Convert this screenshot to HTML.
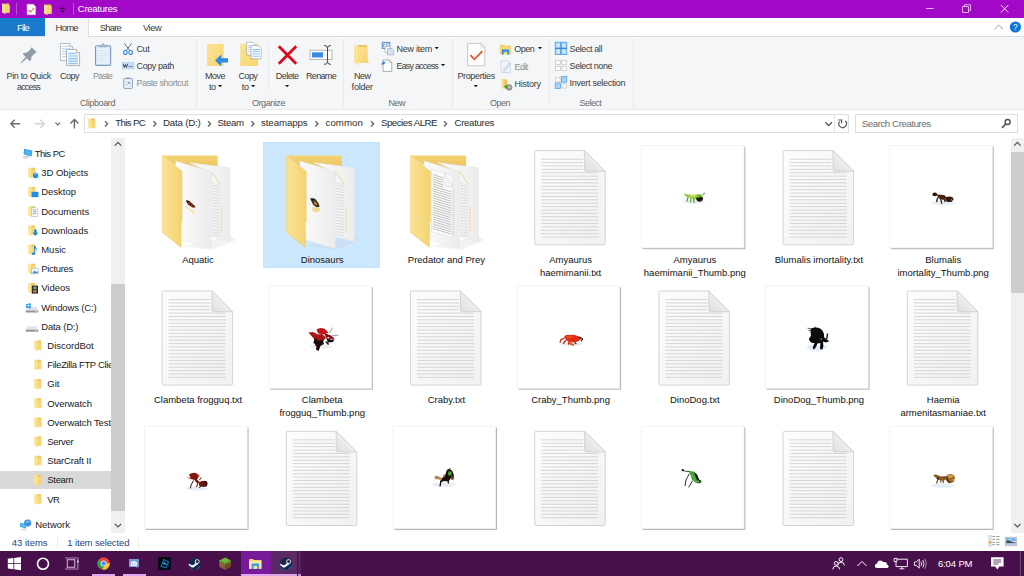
<!DOCTYPE html>
<html>
<head>
<meta charset="utf-8">
<title>Creatures</title>
<style>
html,body{margin:0;padding:0;background:#fff;}
body{width:1024px;height:576px;overflow:hidden;font-family:"Liberation Sans",sans-serif;}
#root{position:relative;width:1024px;height:576px;overflow:hidden;background:#fff;}
.a{position:absolute;}
.t{position:absolute;white-space:pre;}
svg{position:absolute;overflow:visible;}
</style>
</head>
<body>
<div id="root">
<!-- title bar -->
<div class="a" style="left:0;top:0;width:1024px;height:18px;background:#a209c7;"></div>
<div class="a" style="left:16px;top:3px;width:1px;height:12px;background:#b84fd2;"></div>
<div class="a" style="left:73px;top:3px;width:1px;height:12px;background:#b84fd2;"></div>
<!-- tab strip -->
<div class="a" style="left:0;top:18px;width:1024px;height:18px;background:#fff;"></div>
<div class="a" style="left:0;top:18px;width:45px;height:18px;background:#1979ca;"></div>
<!-- ribbon -->
<div class="a" style="left:0;top:36px;width:1024px;height:74px;background:#f5f6f7;border-top:1px solid #dadbdc;border-bottom:1px solid #e9eaeb;box-sizing:border-box;"></div>
<div class="a" style="left:45px;top:18px;width:44px;height:19px;background:#f5f6f7;border-right:1px solid #e0e1e2;box-sizing:border-box;"></div>
<!-- ribbon separators -->
<div class="a" style="left:196px;top:39px;width:1px;height:69px;background:#e9eaec;"></div>
<div class="a" style="left:268px;top:42px;width:1px;height:48px;background:#e9eaec;"></div>
<div class="a" style="left:343px;top:39px;width:1px;height:69px;background:#e9eaec;"></div>
<div class="a" style="left:452px;top:39px;width:1px;height:69px;background:#e9eaec;"></div>
<div class="a" style="left:549px;top:39px;width:1px;height:69px;background:#e9eaec;"></div>
<div class="a" style="left:633px;top:39px;width:1px;height:69px;background:#e9eaec;"></div>
<!-- address bar -->
<div class="a" style="left:84px;top:114px;width:765px;height:19px;border:1px solid #dfdfdf;box-sizing:border-box;background:#fff;"></div>
<div class="a" style="left:834px;top:115px;width:1px;height:17px;background:#e5e5e5;"></div>
<div class="a" style="left:855px;top:114px;width:163px;height:19px;border:1px solid #dfdfdf;box-sizing:border-box;background:#fff;"></div>
<!-- main scrollbar -->
<div class="a" style="left:1011px;top:138px;width:13px;height:395px;background:#f0f0f0;"></div>
<div class="a" style="left:1011px;top:152px;width:13px;height:141px;background:#cdcdcd;"></div>
<!-- sidebar selection -->
<div class="a" style="left:0;top:470.6px;width:111.3px;height:18.8px;background:#d9d9d9;"></div>
<!-- ribbon + titlebar + nav icons (absolute page coords) -->
<svg width="1024" height="140" viewBox="0 0 1024 140" style="left:0;top:0;">
<defs>
<linearGradient id="fy" x1="0" y1="0" x2="1" y2="1"><stop offset="0" stop-color="#fde495"/><stop offset="1" stop-color="#f6d36f"/></linearGradient>
</defs>
<!-- title bar: folder -->
<g id="tfold">
<path d="M4.6,3.4 H9 V12.6 H5.2 Z" fill="#eec55a"/>
<path d="M2,3.2 L5.6,4.4 V14 L2,12.4 Z" fill="#fbe28d"/>
<path d="M5.6,5 H9.8 V12.8 H5.6 Z" fill="#f6d574"/>
</g>
<!-- title bar: properties doc -->
<path d="M27,4.3 H33.4 L35.6,6.5 V14.8 H27 Z" fill="#fbfbfb" stroke="#d8d8d8" stroke-width=".4"/>
<path d="M28.6,10.2 L30.4,12 L34,8" fill="none" stroke="#e36a35" stroke-width="1.1"/>
<!-- title bar: folder 2 -->
<g transform="translate(42,1)">
<path d="M4.6,3.4 H9 V12.6 H5.2 Z" fill="#eec55a"/>
<path d="M2,3.2 L5.6,4.4 V14 L2,12.4 Z" fill="#fbe28d"/>
<path d="M5.6,5 H9.8 V12.8 H5.6 Z" fill="#f6d574"/>
</g>
<!-- title bar dropdown -->
<path d="M60,8.3 H64.8" stroke="#1a0520" stroke-width="1"/>
<path d="M60.2,10.6 H64.6 L62.4,12.8 Z" fill="#1a0520"/>
<!-- window controls -->
<path d="M926,8.5 H933.5" stroke="#f6e2fa" stroke-width=".8"/>
<path d="M962.5,6.5 H968.5 V12.5 H962.5 Z" fill="none" stroke="#f3d4f8" stroke-width=".8"/>
<path d="M964.5,6.5 V4.7 H970.5 V10.7 H968.5" fill="none" stroke="#f3d4f8" stroke-width=".8"/>
<path d="M1000.8,5 L1008.4,12.6 M1008.4,5 L1000.8,12.6" stroke="#fbf0fd" stroke-width=".9"/>
<!-- ribbon collapse chevron + help -->
<path d="M994.4,29.2 L998.7,25 L1003,29.2" fill="none" stroke="#9a9a9a" stroke-width="1"/>
<circle cx="1015.4" cy="27" r="5.6" fill="#0f76d2"/>
<text x="1015.4" y="30.2" font-family="Liberation Sans, sans-serif" font-size="8.4" fill="#fff" text-anchor="middle">?</text>

<!-- pin -->
<g transform="translate(26.3,57.6) rotate(45)" fill="#8e9aa6">
<path d="M-3.6,-11.1 H3.6 L2.9,-8.6 V-4.6 L5,-1.4 V0 H-5 V-1.4 L-2.9,-4.6 V-8.6 Z"/>
<path d="M-0.9,0 H0.9 L0.4,7.5 H-0.4 Z"/>
</g>
<!-- copy -->
<g>
<path d="M60.4,43.5 H69.4 L72.7,46.8 V60.6 H60.4 Z" fill="#fff" stroke="#a6a6a6" stroke-width=".8"/>
<path d="M62,46.3 H68.4 M62,48.9 H71 M62,51.5 H71 M62,54.1 H71 M62,56.7 H71" stroke="#b9d9f7" stroke-width="1.3"/>
<path d="M69.4,43.5 V46.8 H72.7" fill="#f4f4f4" stroke="#a6a6a6" stroke-width=".7"/>
<path d="M66.5,49.5 H76.3 L79.6,52.8 V65.6 H66.5 Z" fill="#fff" stroke="#a0a0a0" stroke-width=".8"/>
<rect x="68.2" y="52.4" width="9.8" height="12" fill="#e3f0fc"/>
<path d="M68.2,53.4 H75.4 M68.2,56 H78 M68.2,58.6 H78 M68.2,61.2 H78 M68.2,63.7 H78" stroke="#93c5f3" stroke-width="1.2"/>
<path d="M76.3,49.5 V52.8 H79.6" fill="#f4f4f4" stroke="#a0a0a0" stroke-width=".7"/>
</g>
<!-- paste -->
<g>
<rect x="95.5" y="45.8" width="15.2" height="19.6" rx="1.2" fill="#dde9f6" stroke="#7f9abf" stroke-width="1.1"/>
<rect x="97.2" y="48" width="11.8" height="15.8" fill="#eaf2fb"/>
<path d="M97.6,50.6 H108.6 M97.6,53.2 H108.6 M97.6,55.8 H108.6 M97.6,58.4 H108.6 M97.6,61 H108.6" stroke="#c9dcf0" stroke-width=".6"/>
<path d="M99.2,46.8 Q99.2,45.2 101,45.2 H101.8 L103,43.2 L104.2,45.2 H105 Q106.8,45.2 106.8,46.8 Z" fill="#a9bcd6" stroke="#7f9abf" stroke-width=".5"/>
</g>
<!-- cut -->
<g fill="none">
<path d="M124.4,43.2 L129.6,50.6 M131.6,43.2 L126.4,50.6" stroke="#6f7a86" stroke-width="1"/>
<ellipse cx="125.3" cy="52.4" rx="1.7" ry="2.1" stroke="#2f86dc" stroke-width="1.1"/>
<ellipse cx="130.7" cy="52.4" rx="1.7" ry="2.1" stroke="#2f86dc" stroke-width="1.1"/>
</g>
<!-- copy path -->
<rect x="122.2" y="62.2" width="11.8" height="6.8" fill="#c7e0f8" stroke="#9dc4ec" stroke-width=".4"/>
<path d="M123.2,63.8 L124.3,67.4 L125.4,64.6 L126.5,67.4 L127.6,63.8" fill="none" stroke="#222" stroke-width=".8"/>
<path d="M128.6,66.6 H132.8" stroke="#4a6f98" stroke-width=".8"/>
<!-- paste shortcut -->
<g>
<rect x="123.8" y="78.6" width="8.6" height="9.8" rx=".6" fill="#eef4fb" stroke="#7f97b6" stroke-width=".9"/>
<path d="M126.4,78.8 V77.6 H129.8 V78.8 Z" fill="#9fb2cc" stroke="#7f97b6" stroke-width=".4"/>
<rect x="126" y="81.6" width="4.2" height="4.2" fill="#fff" stroke="#a9b9cc" stroke-width=".4"/>
<path d="M127,84.8 L129.2,82.6 M127.8,82.6 H129.2 V84" fill="none" stroke="#3d6fb0" stroke-width=".7"/>
</g>
<!-- move to -->
<rect x="207" y="43.8" width="16.6" height="22.2" fill="url(#fy)"/>
<path d="M215,60.4 L221.2,54.6 V58.2 H228 V62.6 H221.2 V66.2 Z" fill="#2f8ce0"/>
<!-- copy to -->
<rect x="240.2" y="43.8" width="17.8" height="22.2" fill="url(#fy)"/>
<g>
<path d="M246.6,42.2 H252.6 L255,44.6 V55 H246.6 Z" fill="#fff" stroke="#a0a0a0" stroke-width=".7"/>
<path d="M247.8,45.6 H252 M247.8,47.6 H253.6 M247.8,49.6 H253.6 M247.8,51.6 H250.6" stroke="#a9cdf2" stroke-width=".9"/>
<path d="M251,45.6 H258.4 L261.2,48.4 V58.8 H251 Z" fill="#fff" stroke="#a0a0a0" stroke-width=".7"/>
<path d="M252.4,49.6 H259.8 M252.4,51.8 H259.8 M252.4,54 H259.8 M252.4,56.2 H259.8" stroke="#8fc0f0" stroke-width="1.1"/>
</g>
<!-- delete -->
<path d="M278.8,46.2 L296.2,63.8 M296.2,46.2 L278.8,63.8" stroke="#dc0b1a" stroke-width="2.7"/>
<!-- rename -->
<rect x="310" y="50.2" width="22" height="9.2" fill="#fff" stroke="#a6a6a6" stroke-width=".8"/>
<rect x="312" y="52.3" width="11" height="5.2" fill="#368be4"/>
<path d="M324,45.4 Q327.5,45.4 327.5,48 Q327.5,45.4 331,45.4 M327.5,48 V61.8 M324,64.4 Q327.5,64.4 327.5,61.8 Q327.5,64.4 331,64.4" fill="none" stroke="#4a4a4a" stroke-width="1"/>
<!-- new folder -->
<path d="M357.4,45 H367.2 V59.4 L368.4,60.6 V62.6 H358 Z" fill="#ecc35a"/>
<path d="M354.2,44.8 L358.4,46.8 V66 L354.2,62.4 Z" fill="#fbe391"/>
<path d="M358.4,46.8 H367.4 V62.6 H358.4 Z" fill="url(#fy)"/>
<!-- new item -->
<g>
<rect x="382.2" y="42.4" width="7.6" height="6" fill="#e4eefa" stroke="#3f86d8" stroke-width=".9"/>
<path d="M383.4,44 V47.2 M383.4,44 H385 M386.6,44 V47.2 M386.6,44 H388.2" stroke="#56708e" stroke-width=".6" fill="none"/>
<path d="M385,46.4 H389 L390.4,47.8 V52.4 H385 Z" fill="#fff" stroke="#9a9a9a" stroke-width=".6"/>
<path d="M387.6,48.6 H392 L393.6,50.2 V54.8 H387.6 Z" fill="#d9e4f2" stroke="#8f9db0" stroke-width=".6"/>
</g>
<!-- easy access -->
<g>
<path d="M383,60 H389.4 L391.8,62.4 V71.4 H383 Z" fill="#fff" stroke="#9a9a9a" stroke-width=".8"/>
<path d="M389.4,60 V62.4 H391.8" fill="none" stroke="#9a9a9a" stroke-width=".6"/>
<path d="M381,64.6 L383,61.4 L385.6,62 L384,64.6 Z" fill="#3f86d8"/>
</g>
<!-- properties -->
<path d="M467.6,43.4 H481.2 L484.8,47 V65.8 H467.6 Z" fill="#fdfdfd" stroke="#bdbdbd" stroke-width=".8"/>
<path d="M481.2,43.4 V47 H484.8" fill="none" stroke="#bdbdbd" stroke-width=".7"/>
<path d="M470.4,55.2 L474.4,59.4 L482.4,51.2" fill="none" stroke="#e2552c" stroke-width="1.7"/>
<!-- open -->
<g>
<path d="M499.8,44.4 H504 L505,45.6 H511.2 V54.2 H499.8 Z" fill="#f6d67a"/>
<circle cx="501.6" cy="45.6" r=".6" fill="#e0a93b"/>
<path d="M501.8,49.4 H509.2 V54.4 H507.4 V51.8 H503.6 V54.4 H501.8 Z" fill="#2a8de2"/>
</g>
<!-- edit -->
<g opacity=".8">
<path d="M501,60.8 H507.6 L510.2,63.4 V72.6 H501 Z" fill="#f0f5fb" stroke="#b5c6da" stroke-width=".7"/>
<path d="M503,70.6 L509.6,62.4 L511,63.4 L504.6,71.4 Z" fill="#cfdff0" stroke="#a4bbd6" stroke-width=".5"/>
</g>
<!-- history -->
<g>
<path d="M501.2,78.8 H505.4 V88.6 H501.8 Z" fill="#fbe391"/>
<path d="M503.4,79.6 H507.4 V88.6 H503.4 Z" fill="#efc95f"/>
<circle cx="509.2" cy="87.4" r="2.9" fill="#9a9a9a" stroke="#7a7a7a" stroke-width=".5"/>
<path d="M509.2,85.8 V87.6 H510.6" stroke="#fff" stroke-width=".6" fill="none"/>
<path d="M504,86.8 L507,84.6 V89 Z" fill="#3a9a3a"/>
</g>
<!-- select all -->
<g>
<rect x="555.2" y="42.2" width="11.6" height="12.4" fill="#9fd0f8" stroke="#4aa0ea" stroke-width=".8"/>
<rect x="556.4" y="43.4" width="3.6" height="4" fill="#cfe7fb"/><rect x="562" y="43.4" width="3.6" height="4" fill="#cfe7fb"/>
<rect x="556.4" y="49.6" width="3.6" height="4" fill="#cfe7fb"/><rect x="562" y="49.6" width="3.6" height="4" fill="#cfe7fb"/>
<path d="M561,42.2 V54.6 M555.2,48.4 H566.8" stroke="#2f8be0" stroke-width="1.1"/>
</g>
<!-- select none -->
<g fill="#fdfdfd" stroke="#c2c2c2" stroke-width=".7">
<rect x="555.6" y="60.4" width="4.8" height="4.2"/><rect x="561.8" y="60.4" width="4.8" height="4.2"/>
<rect x="555.6" y="66.4" width="4.8" height="4.2"/><rect x="561.8" y="66.4" width="4.8" height="4.2"/>
</g>
<!-- invert selection -->
<g stroke-width=".7">
<rect x="555.6" y="77.8" width="4.6" height="4" fill="#fdfdfd" stroke="#c2c2c2"/>
<rect x="561.4" y="76.6" width="5.4" height="5.6" fill="#a6d3f8" stroke="#4aa0ea"/>
<rect x="555.2" y="83" width="5.4" height="5.6" fill="#a6d3f8" stroke="#4aa0ea"/>
<rect x="562" y="84" width="4.6" height="4" fill="#fdfdfd" stroke="#c2c2c2"/>
</g>
<!-- dropdown arrows -->
<g fill="#1a1a1a">
<path d="M218,85 H222.2 L220.1,87.2 Z"/>
<path d="M251,85 H255.2 L253.1,87.2 Z"/>
<path d="M285,85 H289.2 L287.1,87.2 Z"/>
<path d="M434.6,47 H438.8 L436.7,49.2 Z"/>
<path d="M440.9,64 H445.1 L443,66.2 Z"/>
<path d="M473.7,85 H477.9 L475.8,87.2 Z"/>
<path d="M537.8,47 H542 L539.9,49.2 Z"/>
</g>
<!-- nav arrows -->
<g fill="none" stroke-width="1.4">
<path d="M20.2,123.8 H10.8 M14.8,119.8 L10.8,123.8 L14.8,127.8" stroke="#6a6a6a"/>
<path d="M35,123.8 H44.4 M40.4,119.8 L44.4,123.8 L40.4,127.8" stroke="#d4d4d4"/>
<path d="M55.4,122.6 L57.7,124.9 L60,122.6" stroke="#6a6a6a" stroke-width="1.3"/>
<path d="M74.4,128.6 V119.6 M70.4,123.6 L74.4,119.6 L78.4,123.6" stroke="#6a6a6a"/>
</g>
<!-- address folder icon -->
<path d="M90.6,118.4 H94.8 V127.4 H91 Z" fill="#ecc35a"/>
<path d="M88.2,118.2 L91.6,119.4 V129 L88.2,127.4 Z" fill="#fbe391"/>
<path d="M91.6,120 H95.4 V127.6 H91.6 Z" fill="#f6d574"/>
<!-- breadcrumb chevrons -->
<g fill="none" stroke="#646464" stroke-width="1.35">
<path d="M105,121.2 L107.6,123.8 L105,126.4"/>
<path d="M153.4,121.2 L156,123.8 L153.4,126.4"/>
<path d="M208,121.2 L210.6,123.8 L208,126.4"/>
<path d="M251.4,121.2 L254,123.8 L251.4,126.4"/>
<path d="M315.4,121.2 L318,123.8 L315.4,126.4"/>
<path d="M371,121.2 L373.6,123.8 L371,126.4"/>
<path d="M444,121.2 L446.6,123.8 L444,126.4"/>
</g>
<!-- address dropdown + refresh -->
<path d="M825.4,122.2 L828.7,125.5 L832,122.2" fill="none" stroke="#555" stroke-width="1.3"/>
<path d="M845.2,121 A3.8,3.8 0 1 1 839.5,121.7" fill="none" stroke="#555" stroke-width="1.2"/>
<path d="M838.2,120 H841.6 V123.2" fill="none" stroke="#555" stroke-width="1.2"/>
<!-- search magnifier -->
<circle cx="1007.6" cy="122" r="2.5" fill="none" stroke="#505050" stroke-width="1.4"/>
<path d="M1005.8,124 L1002,127.8" stroke="#505050" stroke-width="1.7"/>
</svg>
<!-- sidebar icons -->
<svg width="130" height="576" viewBox="0 0 130 576" style="left:0;top:0;">
<path d="M24.2,148.8 L32.4,150.8 L31.6,156.6 L23.6,154.2 Z" fill="#2c9be8"/>
<path d="M25.2,150.0 L31.4,151.6 L30.9,155.4 L24.7,153.4 Z" fill="#55b6f4"/>
<path d="M21.4,157.0 L26,155.4 L30.6,157.2 L25.6,159.0 Z" fill="#d5d9de"/>
<path d="M26.4,155.0 L28.6,155.8 L28.4,157.0 L26.2,156.2 Z" fill="#b8bec6"/>
<path d="M30.6,167.8 H35.0 V177.0 H31.2 Z" fill="#ecc35a"/><path d="M28.2,167.6 L31.8,168.8 V178.4 L28.2,176.8 Z" fill="#fbe391"/><path d="M31.8,169.4 H35.6 V177.2 H31.8 Z" fill="#f6d778"/>
<path d="M33,173.6 L35.6,172.4 L38.2,173.6 V177.2 L35.6,178.6 L33,177.2 Z" fill="#1d8fe6"/>
<path d="M33,173.6 L35.6,174.8 L38.2,173.6 L35.6,172.4 Z" fill="#7cc6f8"/>
<path d="M30.6,187.0 H35.0 V196.2 H31.2 Z" fill="#ecc35a"/><path d="M28.2,186.8 L31.8,188.0 V197.6 L28.2,196.0 Z" fill="#fbe391"/><path d="M31.8,188.6 H35.6 V196.4 H31.8 Z" fill="#f6d778"/>
<rect x="31.6" y="191.8" width="6.8" height="5.4" fill="#1e8ee6"/>
<path d="M30.6,206.2 H35.0 V215.4 H31.2 Z" fill="#ecc35a"/><path d="M28.2,206.0 L31.8,207.2 V216.8 L28.2,215.2 Z" fill="#fbe391"/><path d="M31.8,207.8 H35.6 V215.6 H31.8 Z" fill="#f6d778"/>
<path d="M31.8,207.6 H36 L37.8,209.4 V216.6 H31.8 Z" fill="#fdfdfd" stroke="#9aa3ad" stroke-width=".5"/>
<path d="M33,210.0 H36.4 M33,211.8 H36.4 M33,213.6 H36.4" stroke="#5b87c2" stroke-width=".7"/>
<path d="M30.6,225.4 H35.0 V234.6 H31.2 Z" fill="#ecc35a"/><path d="M28.2,225.2 L31.8,226.4 V236.0 L28.2,234.4 Z" fill="#fbe391"/><path d="M31.8,227.0 H35.6 V234.8 H31.8 Z" fill="#f6d778"/>
<path d="M34.2,229.4 H36.6 V232.4 H38.4 L35.4,236.0 L32.4,232.4 H34.2 Z" fill="#1d86e2"/>
<path d="M30.6,244.6 H35.0 V253.8 H31.2 Z" fill="#ecc35a"/><path d="M28.2,244.4 L31.8,245.6 V255.2 L28.2,253.6 Z" fill="#fbe391"/><path d="M31.8,246.2 H35.6 V254.0 H31.8 Z" fill="#f6d778"/>
<path d="M34,245.6 Q37.6,247.4 36.2,251.4 Q36,248.6 34.8,248.0 V253.4 H34 Z" fill="#1d86e2"/>
<ellipse cx="33.4" cy="253.8" rx="1.7" ry="1.3" fill="#1d86e2"/>
<path d="M30.6,263.8 H35.0 V273.0 H31.2 Z" fill="#ecc35a"/><path d="M28.2,263.6 L31.8,264.8 V274.4 L28.2,272.8 Z" fill="#fbe391"/><path d="M31.8,265.4 H35.6 V273.2 H31.8 Z" fill="#f6d778"/>
<rect x="31.6" y="268.4" width="6.8" height="5.6" fill="#f4f8fc" stroke="#9aa9ba" stroke-width=".5"/>
<path d="M32.4,273.0 L34.4,270.6 L36,272.0 L37.6,271.2 V273.2 H32.4 Z" fill="#3d86c8"/>
<path d="M30.6,283.0 H35.0 V292.2 H31.2 Z" fill="#ecc35a"/><path d="M28.2,282.8 L31.8,284.0 V293.6 L28.2,292.0 Z" fill="#fbe391"/><path d="M31.8,284.6 H35.6 V292.4 H31.8 Z" fill="#f6d778"/>
<rect x="31.8" y="285.6" width="6.2" height="8" fill="#2a2a2e"/>
<rect x="33.2" y="286.6" width="3.4" height="2.6" fill="#6fa86a"/><rect x="33.2" y="290.0" width="3.4" height="2.6" fill="#c8743a"/>
<path d="M27.6,307.0 H36.4 L38.2,310.5 H25.7 Z" fill="#dfe2e6"/>
<rect x="25.7" y="310.5" width="12.5" height="2" fill="#8e949b"/>
<rect x="35.2" y="311.1" width="1.8" height=".8" fill="#d8f0c0"/>
<path d="M26,304.0 L27.9,303.7 V305.6 H26 Z M28.4,303.6 L30.8,303.2 V305.6 H28.4 Z M26,306.1 H27.9 V308.0 L26,307.7 Z M28.4,306.1 H30.8 V308.5 L28.4,308.1 Z" fill="#1d9bf0"/>
<path d="M27.6,326.2 H36.4 L38.2,329.7 H25.7 Z" fill="#dfe2e6"/>
<rect x="25.7" y="329.7" width="12.5" height="2" fill="#8e949b"/>
<rect x="35.2" y="330.3" width="1.8" height=".8" fill="#d8f0c0"/>
<path d="M36.6,340.6 H41.0 V349.8 H37.2 Z" fill="#ecc35a"/><path d="M34.2,340.4 L37.8,341.6 V351.2 L34.2,349.6 Z" fill="#fbe391"/><path d="M37.8,342.2 H41.6 V350.0 H37.8 Z" fill="#f6d778"/>
<path d="M36.6,359.8 H41.0 V369.0 H37.2 Z" fill="#ecc35a"/><path d="M34.2,359.6 L37.8,360.8 V370.4 L34.2,368.8 Z" fill="#fbe391"/><path d="M37.8,361.4 H41.6 V369.2 H37.8 Z" fill="#f6d778"/>
<path d="M36.6,379.0 H41.0 V388.2 H37.2 Z" fill="#ecc35a"/><path d="M34.2,378.8 L37.8,380.0 V389.6 L34.2,388.0 Z" fill="#fbe391"/><path d="M37.8,380.6 H41.6 V388.4 H37.8 Z" fill="#f6d778"/>
<path d="M36.6,398.2 H41.0 V407.4 H37.2 Z" fill="#ecc35a"/><path d="M34.2,398.0 L37.8,399.2 V408.8 L34.2,407.2 Z" fill="#fbe391"/><path d="M37.8,399.8 H41.6 V407.6 H37.8 Z" fill="#f6d778"/>
<path d="M36.6,417.4 H41.0 V426.6 H37.2 Z" fill="#ecc35a"/><path d="M34.2,417.2 L37.8,418.4 V428.0 L34.2,426.4 Z" fill="#fbe391"/><path d="M37.8,419.0 H41.6 V426.8 H37.8 Z" fill="#f6d778"/>
<path d="M36.6,436.6 H41.0 V445.8 H37.2 Z" fill="#ecc35a"/><path d="M34.2,436.4 L37.8,437.6 V447.2 L34.2,445.6 Z" fill="#fbe391"/><path d="M37.8,438.2 H41.6 V446.0 H37.8 Z" fill="#f6d778"/>
<path d="M36.6,455.8 H41.0 V465.0 H37.2 Z" fill="#ecc35a"/><path d="M34.2,455.6 L37.8,456.8 V466.4 L34.2,464.8 Z" fill="#fbe391"/><path d="M37.8,457.4 H41.6 V465.2 H37.8 Z" fill="#f6d778"/>
<path d="M36.6,475.0 H41.0 V484.2 H37.2 Z" fill="#ecc35a"/><path d="M34.2,474.8 L37.8,476.0 V485.6 L34.2,484.0 Z" fill="#fbe391"/><path d="M37.8,476.6 H41.6 V484.4 H37.8 Z" fill="#f6d778"/>
<path d="M36.6,494.2 H41.0 V503.4 H37.2 Z" fill="#ecc35a"/><path d="M34.2,494.0 L37.8,495.2 V504.8 L34.2,503.2 Z" fill="#fbe391"/><path d="M37.8,495.8 H41.6 V503.6 H37.8 Z" fill="#f6d778"/>
<circle cx="27.6" cy="523.0" r="3.6" fill="#3b8fd8"/>
<path d="M25,522.0 Q27.6,519.6 30.4,521.6 Q28,524.0 25,522.0Z" fill="#79c2f2"/>
<path d="M20.4,522.8 L26.4,524.2 L25.8,528.6 L20,526.8 Z" fill="#2c9be8"/>
<path d="M21.2,523.8 L25.6,524.9 L25.2,527.6 L20.9,526.2 Z" fill="#62bcf5"/>
<path d="M21,529.2 L24,528.4 L27,529.6 L23.8,530.6 Z" fill="#cfd4da"/>
</svg>
<!-- file area -->
<div class="a" style="left:263px;top:142px;width:117px;height:126px;background:#cce8ff;box-shadow:inset 0 0 0 1px #c3e2fd;"></div>
<svg width="1024" height="576" viewBox="0 0 1024 576" style="left:0;top:0;">
<defs>
<linearGradient id="gp" x1="0" y1="0" x2="1" y2="1"><stop offset="0" stop-color="#fdfdfd"/><stop offset="1" stop-color="#f1f1f1"/></linearGradient>
<linearGradient id="gf" x1="0" y1="1" x2="1" y2="0"><stop offset="0" stop-color="#dedede"/><stop offset=".5" stop-color="#eeeeee"/><stop offset="1" stop-color="#f8f8f8"/></linearGradient>
<linearGradient id="gc" x1="0" y1="0" x2="1" y2="0"><stop offset="0" stop-color="#fbe394"/><stop offset="1" stop-color="#f4d371"/></linearGradient>
<linearGradient id="gb" x1="0" y1="0" x2="0" y2="1"><stop offset="0" stop-color="#f3d473"/><stop offset="1" stop-color="#e9c05a"/></linearGradient>
<linearGradient id="gw" x1="0" y1="0" x2="1" y2="0"><stop offset="0" stop-color="#fcfcfc"/><stop offset="1" stop-color="#ececec"/></linearGradient>
<linearGradient id="gs" x1="0" y1="0" x2="1" y2="0"><stop offset="0" stop-color="#ddd" stop-opacity=".0"/><stop offset=".5" stop-color="#bbb" stop-opacity=".35"/><stop offset="1" stop-color="#ddd" stop-opacity="0"/></linearGradient>
<filter id="cb" x="-20%" y="-20%" width="140%" height="140%"><feGaussianBlur stdDeviation=".35"/></filter>
<filter id="sh" x="-10%" y="-10%" width="125%" height="125%"><feGaussianBlur stdDeviation=".7"/></filter>
</defs>
<path d="M182.0,246 L212.0,250 L236.0,240 L231.0,236 Z" fill="#c8c8c8" opacity=".22" filter="url(#sh)"/>
<polygon points="162.3,155.5 217.7,155.5 217.7,170.0 182.0,170.0" fill="url(#gb)"/>
<polygon points="189.0,162.6 230.0,167.7 230.0,241.8 211.0,236.5 205.0,170.0" fill="url(#gw)" stroke="#e3e3e3" stroke-width=".5"/>
<path d="M212.3,185.5L219.8,186.7M212.3,188.4L219.8,189.6M212.3,191.3L219.8,192.5M212.3,194.2L219.8,195.4M212.3,197.1L219.8,198.3M212.3,200.0L219.8,201.2M212.3,202.9L219.8,204.1M212.3,205.8L219.8,207.0M212.3,208.7L219.8,209.9M212.3,211.6L219.8,212.8M212.3,214.5L219.8,215.7M212.3,217.4L219.8,218.6M212.3,220.3L219.8,221.5M212.3,223.2L219.8,224.4M212.3,226.1L219.8,227.3M212.3,229.0L219.8,230.2M212.3,231.9L219.8,233.1M212.3,234.8L219.8,236.0" stroke="#c9c9c9" stroke-width=".7" stroke-dasharray="2.2 .7 1.6 .5 1.2 .6" fill="none"/>
<path d="M221.7,206 V232.5" stroke="#f3e3a6" stroke-width="1.3"/>
<path d="M211.2,171.6 L220.0,185 Q215.0,182.5 211.6,183.6 Z" fill="#f6f6f6" stroke="#dadada" stroke-width=".5"/>
<path d="M211.8,172 L220.2,184.6" stroke="#f0dc92" stroke-width=".9"/>
<polygon points="175.5,161.0 211.0,171.5 211.0,248.4 182.0,240.0" fill="url(#gw)" stroke="#e6e6e6" stroke-width=".5"/>
<g filter="url(#cb)"><path d="M185.9,200.4 l3,0.4 l5.6,4.6 l1,2 l-3,0 l-4.6,-3 z" fill="#5a1c10"/><path d="M185.9,200.4 l2.6,0.4 l1.6,2 l-2,0.2 z" fill="#2a1410"/><circle cx="191.7" cy="205.6" r="1" fill="#d02a1a"/><circle cx="189.1" cy="203.2" r=".7" fill="#e8703a"/><path d="M185.9,205.4 l3,3 l3,1 l3.6,2.6 l-2.4,1 l-4,-3 l-3.4,-2.4 z" fill="#f6e29a" opacity=".85"/></g>
<path d="M162.3,155.5 L182.0,171.5 V221.5 L181.0,223 V247.4 L162.3,232.4 Z" fill="url(#gc)" stroke="#ebc864" stroke-width=".5"/>
<path d="M306.2,246 L336.2,250 L360.2,240 L355.2,236 Z" fill="#c8c8c8" opacity=".22" filter="url(#sh)"/>
<polygon points="286.5,155.5 341.9,155.5 341.9,170.0 306.2,170.0" fill="url(#gb)"/>
<polygon points="313.2,162.6 354.2,167.7 354.2,241.8 335.2,236.5 329.2,170.0" fill="url(#gw)" stroke="#e3e3e3" stroke-width=".5"/>
<path d="M336.5,185.5L344.0,186.7M336.5,188.4L344.0,189.6M336.5,191.3L344.0,192.5M336.5,194.2L344.0,195.4M336.5,197.1L344.0,198.3M336.5,200.0L344.0,201.2M336.5,202.9L344.0,204.1M336.5,205.8L344.0,207.0M336.5,208.7L344.0,209.9M336.5,211.6L344.0,212.8M336.5,214.5L344.0,215.7M336.5,217.4L344.0,218.6M336.5,220.3L344.0,221.5M336.5,223.2L344.0,224.4M336.5,226.1L344.0,227.3M336.5,229.0L344.0,230.2M336.5,231.9L344.0,233.1M336.5,234.8L344.0,236.0" stroke="#c9c9c9" stroke-width=".7" stroke-dasharray="2.2 .7 1.6 .5 1.2 .6" fill="none"/>
<path d="M345.9,206 V232.5" stroke="#f3e3a6" stroke-width="1.3"/>
<path d="M335.4,171.6 L344.2,185 Q339.2,182.5 335.8,183.6 Z" fill="#f6f6f6" stroke="#dadada" stroke-width=".5"/>
<path d="M336.0,172 L344.4,184.6" stroke="#f0dc92" stroke-width=".9"/>
<polygon points="299.7,161.0 335.2,171.5 335.2,248.4 306.2,240.0" fill="url(#gw)" stroke="#e6e6e6" stroke-width=".5"/>
<g filter="url(#cb)"><path d="M310.09999999999997,198.4 l5,0.4 l3,3.6 l1.6,4 l-2.6,1.4 l-4,-3 z" fill="#3a3028"/><path d="M310.09999999999997,198.4 l4,0 l-1,2 z" fill="#16120e"/><path d="M313.7,201 l3,1.4 l0.4,3 l-3,-1.2 z" fill="#b87a34"/><path d="M312.09999999999997,207.6 l6,-0.4 l2.6,2.4 l-3,2.8 l-5,-1.2 z" fill="#f1d88a"/></g>
<path d="M286.5,155.5 L306.2,171.5 V221.5 L305.2,223 V247.4 L286.5,232.4 Z" fill="url(#gc)" stroke="#ebc864" stroke-width=".5"/>
<path d="M430.4,246 L460.4,250 L484.4,240 L479.4,236 Z" fill="#c8c8c8" opacity=".22" filter="url(#sh)"/>
<polygon points="410.7,155.5 466.1,155.5 466.1,170.0 430.4,170.0" fill="url(#gb)"/>
<polygon points="437.4,162.6 478.4,167.7 478.4,241.8 459.4,236.5 453.4,170.0" fill="url(#gw)" stroke="#e3e3e3" stroke-width=".5"/>
<path d="M460.7,185.5L468.2,186.7M460.7,188.4L468.2,189.6M460.7,191.3L468.2,192.5M460.7,194.2L468.2,195.4M460.7,197.1L468.2,198.3M460.7,200.0L468.2,201.2M460.7,202.9L468.2,204.1M460.7,205.8L468.2,207.0M460.7,208.7L468.2,209.9M460.7,211.6L468.2,212.8M460.7,214.5L468.2,215.7M460.7,217.4L468.2,218.6M460.7,220.3L468.2,221.5M460.7,223.2L468.2,224.4M460.7,226.1L468.2,227.3M460.7,229.0L468.2,230.2M460.7,231.9L468.2,233.1M460.7,234.8L468.2,236.0" stroke="#c9c9c9" stroke-width=".7" stroke-dasharray="2.2 .7 1.6 .5 1.2 .6" fill="none"/>
<path d="M470.1,206 V232.5" stroke="#f3e3a6" stroke-width="1.3"/>
<path d="M459.6,171.6 L468.4,185 Q463.4,182.5 460.0,183.6 Z" fill="#f6f6f6" stroke="#dadada" stroke-width=".5"/>
<path d="M460.2,172 L468.6,184.6" stroke="#f0dc92" stroke-width=".9"/>
<polygon points="423.9,161.0 459.4,171.5 459.4,248.4 430.4,240.0" fill="url(#gw)" stroke="#e6e6e6" stroke-width=".5"/>
<polygon points="431.4,169.0 452.4,175.5 452.4,238.0 431.4,231.6" fill="#fafafa" stroke="#d9d9d9" stroke-width=".5"/>
<path d="M432.9,174.6L443.4,177.8M432.9,176.9L443.4,180.1M432.9,179.3L443.4,182.4M432.9,181.6L443.4,184.8M432.9,184.0L443.4,187.1M432.9,186.3L451.4,191.9M432.9,188.7L451.4,194.2M432.9,191.0L451.4,196.6M432.9,193.4L451.4,198.9M432.9,195.7L451.4,201.3M432.9,198.1L451.4,203.6M432.9,200.4L451.4,206.0M432.9,202.8L451.4,208.3M432.9,205.1L451.4,210.7M432.9,207.5L451.4,213.0M432.9,209.8L451.4,215.4M432.9,212.2L451.4,217.7M432.9,214.5L451.4,220.1M432.9,216.9L451.4,222.4M432.9,219.2L451.4,224.8M432.9,221.6L451.4,227.1M432.9,223.9L451.4,229.5M432.9,226.3L451.4,231.8M432.9,228.6L451.4,234.2" stroke="#9c9c9c" stroke-width=".6" fill="none"/>
<path d="M444.4,173 L452.9,187 L445.4,186 Z" fill="#f6f6f6" stroke="#d0d0d0" stroke-width=".5"/>
<path d="M453.6,190 V236" stroke="#f3e3a6" stroke-width="1.2"/>
<path d="M410.7,155.5 L430.4,171.5 V221.5 L429.4,223 V247.4 L410.7,232.4 Z" fill="url(#gc)" stroke="#ebc864" stroke-width=".5"/>
<path d="M536.2,150.6 H584.6 L605.2,171.2 V243.3 Q605.2,244.8 603.7,244.8 H536.2 Q534.7,244.8 534.7,243.3 V152.1 Q534.7,150.6 536.2,150.6 Z" fill="url(#gp)" stroke="#cfcfcf" stroke-width=".9"/>
<path d="M541.3,159.20H583.1M541.3,162.58H583.1M541.3,165.97H583.1M541.3,169.35H583.1M541.3,172.74H598.2M541.3,176.12H598.2M541.3,179.51H598.2M541.3,182.89H598.2M541.3,186.28H598.2M541.3,189.66H598.2M541.3,193.05H598.2M541.3,196.44H598.2M541.3,199.82H598.2M541.3,203.20H598.2M541.3,206.59H598.2M541.3,209.97H598.2M541.3,213.36H598.2M541.3,216.74H598.2M541.3,220.13H598.2M541.3,223.51H598.2M541.3,226.90H598.2M541.3,230.28H598.2M541.3,233.67H598.2M541.3,237.05H598.2" stroke="#bdbdbd" stroke-width=".6" fill="none"/>
<path d="M584.6,150.6 V169.7 Q584.6,171.2 586.1,171.2 H605.2 Z" fill="url(#gf)" stroke="#cdcdcd" stroke-width=".8" stroke-linejoin="round"/>
<rect x="642.6" y="146.8" width="102.7" height="102.4" fill="#9a9a9a" opacity=".8" filter="url(#sh)"/>
<rect x="641.3" y="145.5" width="102.7" height="102.4" fill="#ffffff" stroke="#f1f1f1" stroke-width=".8"/>
<g filter="url(#cb)"><ellipse cx="694" cy="201.5" rx="11" ry="2" fill="#e6edf4"/><path d="M683.5,193.4 L688,194.6 L694,195 L700,194 L702.6,196 L700,199 L694,199.4 L690,198 L686,196.4 Z" fill="#8ed03a"/><path d="M690,194.6 L696,194.2 L695,196.4 L691,196.6 Z" fill="#f2d28a"/><path d="M696,198 Q699,196 703,197.4 Q703.4,201 699.6,201.8 Q696.4,201.4 696,198 Z" fill="#17170f"/><path d="M697,195 Q700.5,193.6 702.4,196.6 L697.6,198 Z" fill="#6cb62c"/><path d="M688,197 L687,201.4 M691,198.4 L690.4,202.4 M693.6,198.8 L694,203" stroke="#5aa626" stroke-width="1.3" fill="none"/><path d="M702.4,194.8 L705,193" stroke="#3a3a32" stroke-width=".8"/></g>
<path d="M784.6,150.6 H833.0 L853.6,171.2 V243.3 Q853.6,244.8 852.1,244.8 H784.6 Q783.1,244.8 783.1,243.3 V152.1 Q783.1,150.6 784.6,150.6 Z" fill="url(#gp)" stroke="#cfcfcf" stroke-width=".9"/>
<path d="M789.7,159.20H831.5M789.7,162.58H831.5M789.7,165.97H831.5M789.7,169.35H831.5M789.7,172.74H846.6M789.7,176.12H846.6M789.7,179.51H846.6M789.7,182.89H846.6M789.7,186.28H846.6M789.7,189.66H846.6M789.7,193.05H846.6M789.7,196.44H846.6M789.7,199.82H846.6M789.7,203.20H846.6M789.7,206.59H846.6M789.7,209.97H846.6M789.7,213.36H846.6M789.7,216.74H846.6M789.7,220.13H846.6M789.7,223.51H846.6M789.7,226.90H846.6M789.7,230.28H846.6M789.7,233.67H846.6M789.7,237.05H846.6" stroke="#bdbdbd" stroke-width=".6" fill="none"/>
<path d="M833.0,150.6 V169.7 Q833.0,171.2 834.5,171.2 H853.6 Z" fill="url(#gf)" stroke="#cdcdcd" stroke-width=".8" stroke-linejoin="round"/>
<rect x="891.0" y="146.8" width="102.7" height="102.4" fill="#9a9a9a" opacity=".8" filter="url(#sh)"/>
<rect x="889.7" y="145.5" width="102.7" height="102.4" fill="#ffffff" stroke="#f1f1f1" stroke-width=".8"/>
<g filter="url(#cb)"><ellipse cx="943" cy="203" rx="12" ry="2" fill="#e9eef4"/><ellipse cx="934.8" cy="194.4" rx="2.4" ry="1.8" fill="#2a120a"/><path d="M936.6,194.6 L944,195 L947,197.4 L944,200 L938.6,198.6 Z" fill="#4a200f"/><ellipse cx="949.4" cy="199.2" rx="4" ry="2.8" fill="#3c180c"/><path d="M951,199.4 q1.6,0.6 1.8,2" stroke="#e8e0da" stroke-width=".7" fill="none"/><path d="M937.6,197.6 L936.6,202 M940.6,198.8 L941.8,203.6 M944,199.4 L945.4,202" stroke="#160a06" stroke-width="1.2" fill="none"/></g>
<path d="M163.6,290.9 H212.0 L232.6,311.6 V383.6 Q232.6,385.1 231.1,385.1 H163.6 Q162.1,385.1 162.1,383.6 V292.4 Q162.1,290.9 163.6,290.9 Z" fill="url(#gp)" stroke="#cfcfcf" stroke-width=".9"/>
<path d="M168.7,299.55H210.5M168.7,302.94H210.5M168.7,306.32H210.5M168.7,309.70H210.5M168.7,313.09H225.6M168.7,316.48H225.6M168.7,319.86H225.6M168.7,323.25H225.6M168.7,326.63H225.6M168.7,330.01H225.6M168.7,333.40H225.6M168.7,336.79H225.6M168.7,340.17H225.6M168.7,343.56H225.6M168.7,346.94H225.6M168.7,350.32H225.6M168.7,353.71H225.6M168.7,357.10H225.6M168.7,360.48H225.6M168.7,363.87H225.6M168.7,367.25H225.6M168.7,370.63H225.6M168.7,374.02H225.6M168.7,377.40H225.6" stroke="#bdbdbd" stroke-width=".6" fill="none"/>
<path d="M212.0,290.9 V310.1 Q212.0,311.6 213.5,311.6 H232.6 Z" fill="url(#gf)" stroke="#cdcdcd" stroke-width=".8" stroke-linejoin="round"/>
<rect x="270.0" y="287.2" width="102.7" height="102.4" fill="#9a9a9a" opacity=".8" filter="url(#sh)"/>
<rect x="268.7" y="285.9" width="102.7" height="102.4" fill="#ffffff" stroke="#f1f1f1" stroke-width=".8"/>
<g filter="url(#cb)"><ellipse cx="321" cy="346.6" rx="11" ry="2.2" fill="#e8eef4"/><path d="M308.4,332.4 L313,332 L318,334.4 L322,334 L326,337.4 L322,343 L318,347 L315,345.4 L315.4,340.6 L312,336.4 Z" fill="#a81316"/><path d="M316.6,329.4 Q320,326.6 325,329 L328.4,332.6 L324,334.4 L318,333.6 Z" fill="#c2171a"/><path d="M314.6,338 L319,341 L322.6,339.4 L324,344 L320.4,346 L318.6,351 L316,349.6 L316.6,345 L313.4,343 Z" fill="#1a0a0a"/><path d="M324,333 L331,335.6 L334.6,338.6 L330,339.6 L326,337.6 Z" fill="#8e1012"/><path d="M326,337.4 L331,340 L334.4,339 L333,342 L328,342.4 Z" fill="#120a0c"/><path d="M326.6,338 l2,-1.2 l1,1.6 z" fill="#f4eef4"/><path d="M329.6,333 L332.6,327.6 M332,335.6 L338.4,335.2" stroke="#7a4a7a" stroke-width=".6" fill="none"/><path d="M326,341.6 L328.6,344.6" stroke="#120a0c" stroke-width="1.6"/></g>
<path d="M412.0,290.9 H460.4 L481.0,311.6 V383.6 Q481.0,385.1 479.5,385.1 H412.0 Q410.5,385.1 410.5,383.6 V292.4 Q410.5,290.9 412.0,290.9 Z" fill="url(#gp)" stroke="#cfcfcf" stroke-width=".9"/>
<path d="M417.1,299.55H458.9M417.1,302.94H458.9M417.1,306.32H458.9M417.1,309.70H458.9M417.1,313.09H474.0M417.1,316.48H474.0M417.1,319.86H474.0M417.1,323.25H474.0M417.1,326.63H474.0M417.1,330.01H474.0M417.1,333.40H474.0M417.1,336.79H474.0M417.1,340.17H474.0M417.1,343.56H474.0M417.1,346.94H474.0M417.1,350.32H474.0M417.1,353.71H474.0M417.1,357.10H474.0M417.1,360.48H474.0M417.1,363.87H474.0M417.1,367.25H474.0M417.1,370.63H474.0M417.1,374.02H474.0M417.1,377.40H474.0" stroke="#bdbdbd" stroke-width=".6" fill="none"/>
<path d="M460.4,290.9 V310.1 Q460.4,311.6 461.9,311.6 H481.0 Z" fill="url(#gf)" stroke="#cdcdcd" stroke-width=".8" stroke-linejoin="round"/>
<rect x="518.4" y="287.2" width="102.7" height="102.4" fill="#9a9a9a" opacity=".8" filter="url(#sh)"/>
<rect x="517.1" y="285.9" width="102.7" height="102.4" fill="#ffffff" stroke="#f1f1f1" stroke-width=".8"/>
<g filter="url(#cb)"><ellipse cx="571" cy="344" rx="12" ry="2" fill="#eaf0f6"/><path d="M564,337 L566,335 L574,334.8 L579,336.4 L581.6,338.6 L578,341.6 L573,342.4 L567,341 Z" fill="#df2a12"/><path d="M566,336 L574,335.6 L572,338 L566.6,338.4 Z" fill="#f0461c"/><path d="M564.6,338 L561,339.6 L560,342.6 M566,340 L563,344 M569,341.6 L568.4,344.6" stroke="#c8300f" stroke-width="1.3" fill="none"/><path d="M569,341 Q570,345 574,344.6" stroke="#e8401a" stroke-width="1.8" fill="none"/><path d="M579,337 L582.6,339 L581,341.4" stroke="#2a1210" stroke-width="1.1" fill="none"/><path d="M574.6,342.4 l1.8,1.8" stroke="#20100e" stroke-width="1.2"/></g>
<path d="M660.4,290.9 H708.8 L729.4,311.6 V383.6 Q729.4,385.1 727.9,385.1 H660.4 Q658.9,385.1 658.9,383.6 V292.4 Q658.9,290.9 660.4,290.9 Z" fill="url(#gp)" stroke="#cfcfcf" stroke-width=".9"/>
<path d="M665.5,299.55H707.3M665.5,302.94H707.3M665.5,306.32H707.3M665.5,309.70H707.3M665.5,313.09H722.4M665.5,316.48H722.4M665.5,319.86H722.4M665.5,323.25H722.4M665.5,326.63H722.4M665.5,330.01H722.4M665.5,333.40H722.4M665.5,336.79H722.4M665.5,340.17H722.4M665.5,343.56H722.4M665.5,346.94H722.4M665.5,350.32H722.4M665.5,353.71H722.4M665.5,357.10H722.4M665.5,360.48H722.4M665.5,363.87H722.4M665.5,367.25H722.4M665.5,370.63H722.4M665.5,374.02H722.4M665.5,377.40H722.4" stroke="#bdbdbd" stroke-width=".6" fill="none"/>
<path d="M708.8,290.9 V310.1 Q708.8,311.6 710.3,311.6 H729.4 Z" fill="url(#gf)" stroke="#cdcdcd" stroke-width=".8" stroke-linejoin="round"/>
<rect x="766.8" y="287.2" width="102.7" height="102.4" fill="#9a9a9a" opacity=".8" filter="url(#sh)"/>
<rect x="765.5" y="285.9" width="102.7" height="102.4" fill="#ffffff" stroke="#f1f1f1" stroke-width=".8"/>
<g filter="url(#cb)"><path d="M806,347 L812,344 L820,346 L828,345 L822,351 L812,351 Z" fill="#e4ecf5"/><path d="M811,328.6 Q816,326.4 821,329 Q824.4,332 824,337 L827,340 L829.6,341 L826,342.6 L823,341.4 L823.4,346 L822.4,349.4 L820,349 L820.4,343 L817.4,343.6 L816,347 L814,349.6 L812.6,348 L814.6,343 Q810,343 809,339.4 Q809.6,337 811,336 Q810,332 811,328.6 Z" fill="#070708"/><path d="M811.6,329 L807.6,328.2 M812,330.4 L808.6,330.6 M815.6,328 L815,326.6" stroke="#1a1a1a" stroke-width=".7"/><path d="M826.6,339.6 L827.6,333.6" stroke="#0a0a0a" stroke-width="1.3"/><rect x="820.4" y="338.6" width="1.6" height="1.2" fill="#b88a80"/></g>
<path d="M908.8,290.9 H957.2 L977.8,311.6 V383.6 Q977.8,385.1 976.3,385.1 H908.8 Q907.3,385.1 907.3,383.6 V292.4 Q907.3,290.9 908.8,290.9 Z" fill="url(#gp)" stroke="#cfcfcf" stroke-width=".9"/>
<path d="M913.9,299.55H955.7M913.9,302.94H955.7M913.9,306.32H955.7M913.9,309.70H955.7M913.9,313.09H970.8M913.9,316.48H970.8M913.9,319.86H970.8M913.9,323.25H970.8M913.9,326.63H970.8M913.9,330.01H970.8M913.9,333.40H970.8M913.9,336.79H970.8M913.9,340.17H970.8M913.9,343.56H970.8M913.9,346.94H970.8M913.9,350.32H970.8M913.9,353.71H970.8M913.9,357.10H970.8M913.9,360.48H970.8M913.9,363.87H970.8M913.9,367.25H970.8M913.9,370.63H970.8M913.9,374.02H970.8M913.9,377.40H970.8" stroke="#bdbdbd" stroke-width=".6" fill="none"/>
<path d="M957.2,290.9 V310.1 Q957.2,311.6 958.7,311.6 H977.8 Z" fill="url(#gf)" stroke="#cdcdcd" stroke-width=".8" stroke-linejoin="round"/>
<rect x="145.8" y="427.5" width="102.7" height="102.4" fill="#9a9a9a" opacity=".8" filter="url(#sh)"/>
<rect x="144.5" y="426.2" width="102.7" height="102.4" fill="#ffffff" stroke="#f1f1f1" stroke-width=".8"/>
<g filter="url(#cb)"><ellipse cx="197" cy="488.6" rx="11" ry="2" fill="#e8eef6"/><path d="M189,474.6 Q193,471.4 197,473.4 L199,476.6 L197,479.6 L199.6,482 L197.4,484 L194.6,480 L191,479 Z" fill="#7e1810"/><path d="M186.2,477.2 L191,478 L190.6,479.2 Z" fill="#c83a2a"/><circle cx="198.4" cy="475.6" r="1" fill="#d82a20"/><path d="M198.6,482.6 Q203,479.4 207,481.6 Q208.6,484.6 206,486.6 Q201.6,487.6 199,485.6 Z" fill="#6a140e"/><path d="M204.6,481.6 Q207.6,483.6 205.6,486.4" stroke="#1a0806" stroke-width="1.4" fill="none"/><path d="M193.6,480.4 L191,485 L190.4,488.4 M197.6,484 L196.4,487.2 M200.6,486 L199.4,488 M199.4,480 L201.4,477.6" stroke="#3a0f0a" stroke-width="1" fill="none"/></g>
<path d="M287.8,431.3 H336.2 L356.8,451.9 V524.0 Q356.8,525.5 355.3,525.5 H287.8 Q286.3,525.5 286.3,524.0 V432.8 Q286.3,431.3 287.8,431.3 Z" fill="url(#gp)" stroke="#cfcfcf" stroke-width=".9"/>
<path d="M292.9,439.90H334.7M292.9,443.28H334.7M292.9,446.67H334.7M292.9,450.05H334.7M292.9,453.44H349.8M292.9,456.82H349.8M292.9,460.21H349.8M292.9,463.59H349.8M292.9,466.98H349.8M292.9,470.36H349.8M292.9,473.75H349.8M292.9,477.13H349.8M292.9,480.52H349.8M292.9,483.90H349.8M292.9,487.29H349.8M292.9,490.67H349.8M292.9,494.06H349.8M292.9,497.44H349.8M292.9,500.83H349.8M292.9,504.21H349.8M292.9,507.60H349.8M292.9,510.98H349.8M292.9,514.37H349.8M292.9,517.75H349.8" stroke="#bdbdbd" stroke-width=".6" fill="none"/>
<path d="M336.2,431.3 V450.4 Q336.2,451.9 337.7,451.9 H356.8 Z" fill="url(#gf)" stroke="#cdcdcd" stroke-width=".8" stroke-linejoin="round"/>
<rect x="394.2" y="427.5" width="102.7" height="102.4" fill="#9a9a9a" opacity=".8" filter="url(#sh)"/>
<rect x="392.9" y="426.2" width="102.7" height="102.4" fill="#ffffff" stroke="#f1f1f1" stroke-width=".8"/>
<g filter="url(#cb)"><ellipse cx="444" cy="484.6" rx="12" ry="2.2" fill="#e8eef6"/><path d="M446.6,470.6 Q449,468.4 452,470.4 L453.6,474 L454,478.6 L451,478 L448.6,481.6 L444,481 L440.6,482.4 L441.6,478.6 L445,476 Z" fill="#1e1008"/><path d="M446.6,470 L450.6,468 L450,471 Z" fill="#2a1a12"/><ellipse cx="449.8" cy="473.4" rx="1.9" ry="2.2" fill="#4aa636"/><path d="M451,476 L453.6,477 L453.4,480 L451,479.4 Z" fill="#7a4a20"/><path d="M434.6,476.6 Q436.6,475 438.6,476.4 L442,478 L440.6,480 L437,479 L435,479.4 Z" fill="#b88a4a"/><path d="M441,480.4 L440,486.4 M448,481 L448.6,483.4" stroke="#160c06" stroke-width="1.3" fill="none"/><path d="M443,476.6 L445,474.6" stroke="#8a5a2a" stroke-width="1.2"/></g>
<path d="M536.2,431.3 H584.6 L605.2,451.9 V524.0 Q605.2,525.5 603.7,525.5 H536.2 Q534.7,525.5 534.7,524.0 V432.8 Q534.7,431.3 536.2,431.3 Z" fill="url(#gp)" stroke="#cfcfcf" stroke-width=".9"/>
<path d="M541.3,439.90H583.1M541.3,443.28H583.1M541.3,446.67H583.1M541.3,450.05H583.1M541.3,453.44H598.2M541.3,456.82H598.2M541.3,460.21H598.2M541.3,463.59H598.2M541.3,466.98H598.2M541.3,470.36H598.2M541.3,473.75H598.2M541.3,477.13H598.2M541.3,480.52H598.2M541.3,483.90H598.2M541.3,487.29H598.2M541.3,490.67H598.2M541.3,494.06H598.2M541.3,497.44H598.2M541.3,500.83H598.2M541.3,504.21H598.2M541.3,507.60H598.2M541.3,510.98H598.2M541.3,514.37H598.2M541.3,517.75H598.2" stroke="#bdbdbd" stroke-width=".6" fill="none"/>
<path d="M584.6,431.3 V450.4 Q584.6,451.9 586.1,451.9 H605.2 Z" fill="url(#gf)" stroke="#cdcdcd" stroke-width=".8" stroke-linejoin="round"/>
<rect x="642.6" y="427.5" width="102.7" height="102.4" fill="#9a9a9a" opacity=".8" filter="url(#sh)"/>
<rect x="641.3" y="426.2" width="102.7" height="102.4" fill="#ffffff" stroke="#f1f1f1" stroke-width=".8"/>
<g filter="url(#cb)"><path d="M689,471 L693.6,471.4 L697,474.6 L699,479.6 L701.6,481 L700,483.6 L696,483 L692,479.6 Z" fill="#3f9a34"/><path d="M694,472 L697,474.6 L699,479.4 L701.4,481 L700.6,482.6 L698,482.6 L695.6,476.6 Z" fill="#14180f"/><path d="M691,474 L696,481 L699.6,481.6" stroke="#52b040" stroke-width="1.6" fill="none"/><path d="M682,469.6 L684.6,471 L689.6,471.6" stroke="#2a6a26" stroke-width="1.2" fill="none"/><path d="M682,469.4 l1.6,1.4" stroke="#141414" stroke-width="1.6"/><path d="M689.4,473.6 L686,480 L685,486 M692.6,480.6 L690.6,484 L688.6,487.4" stroke="#181c14" stroke-width=".9" fill="none"/></g>
<path d="M784.6,431.3 H833.0 L853.6,451.9 V524.0 Q853.6,525.5 852.1,525.5 H784.6 Q783.1,525.5 783.1,524.0 V432.8 Q783.1,431.3 784.6,431.3 Z" fill="url(#gp)" stroke="#cfcfcf" stroke-width=".9"/>
<path d="M789.7,439.90H831.5M789.7,443.28H831.5M789.7,446.67H831.5M789.7,450.05H831.5M789.7,453.44H846.6M789.7,456.82H846.6M789.7,460.21H846.6M789.7,463.59H846.6M789.7,466.98H846.6M789.7,470.36H846.6M789.7,473.75H846.6M789.7,477.13H846.6M789.7,480.52H846.6M789.7,483.90H846.6M789.7,487.29H846.6M789.7,490.67H846.6M789.7,494.06H846.6M789.7,497.44H846.6M789.7,500.83H846.6M789.7,504.21H846.6M789.7,507.60H846.6M789.7,510.98H846.6M789.7,514.37H846.6M789.7,517.75H846.6" stroke="#bdbdbd" stroke-width=".6" fill="none"/>
<path d="M833.0,431.3 V450.4 Q833.0,451.9 834.5,451.9 H853.6 Z" fill="url(#gf)" stroke="#cdcdcd" stroke-width=".8" stroke-linejoin="round"/>
<rect x="891.0" y="427.5" width="102.7" height="102.4" fill="#9a9a9a" opacity=".8" filter="url(#sh)"/>
<rect x="889.7" y="426.2" width="102.7" height="102.4" fill="#ffffff" stroke="#f1f1f1" stroke-width=".8"/>
<g filter="url(#cb)"><ellipse cx="943" cy="485.6" rx="12" ry="2.2" fill="#e7edf5"/><path d="M933,475 L936,474.6 L941,476.6 L946,476 L947,479 L943,481 L938,480 L936,478 Z" fill="#8a5a24"/><path d="M936.6,477 L939,478.6 L937.6,480 Z" fill="#2a1a0c"/><circle cx="950.4" cy="478.6" r="4.6" fill="#9a6a2a"/><path d="M947.6,475.6 Q950.6,473.6 953.6,475.6 L952,478 L948.6,478 Z" fill="#c89a4a"/><path d="M946.6,477 L948,481.6 L950,482.6" stroke="#3a240e" stroke-width="1.2" fill="none"/><path d="M952.6,479.6 l2.6,-0.6 l-1,2.4 z" fill="#e8c87a"/><path d="M937.6,479.6 L936.6,483.6 M941,480.6 L940.6,482.6 M943.6,480.6 L943,483" stroke="#6a441a" stroke-width="1.1" fill="none"/></g>
</svg>
<div class="a" style="left:0;top:533px;width:1024px;height:18px;background:#fff;"></div>
<!-- taskbar -->
<div class="a" style="left:0;top:551px;width:1024px;height:25px;background:#48104a;"></div>
<div class="a" style="left:241px;top:551px;width:30px;height:25px;background:#771b9b;"></div>
<div class="a" style="left:271px;top:551px;width:26px;height:25px;background:#5b2a64;"></div>
<div class="a" style="left:298px;top:551px;width:3px;height:25px;background:#55235c;"></div>
<div class="a" style="left:92px;top:574px;width:23px;height:2px;background:#e3a6f1;"></div>
<div class="a" style="left:123px;top:574px;width:23px;height:2px;background:#e3a6f1;"></div>
<div class="a" style="left:241px;top:574px;width:30px;height:2px;background:#e3a6f1;"></div>
<div class="a" style="left:271px;top:574px;width:26px;height:2px;background:#dca3ea;"></div>
<div class="a" style="left:298px;top:574px;width:3px;height:2px;background:#c891d6;"></div>
<div class="a" style="left:1020px;top:551px;width:1px;height:25px;background:#6d4a70;"></div>
<svg width="1024" height="25" viewBox="0 551 1024 25" style="left:0;top:551px;">
<!-- windows logo -->
<path d="M7.8,558.8 L13.4,558 V563.2 H7.8 Z M14.2,557.9 L21,556.9 V563.2 H14.2 Z M7.8,564 H13.4 V569.2 L7.8,568.4 Z M14.2,564 H21 V570.2 L14.2,569.3 Z" fill="#fff"/>
<!-- cortana -->
<circle cx="43" cy="563.7" r="5.5" fill="none" stroke="#fff" stroke-width="1.6"/>
<!-- task view -->
<g fill="none" stroke="#c8acd2">
<rect x="67.3" y="559.7" width="7.4" height="7.6" stroke-width="1.1"/>
<path d="M65.4,558 H76.4 M65.4,569 H76.4" stroke-width=".9" opacity=".85"/>
<path d="M66,557.4 V558.6 M66,568.4 V569.6 M75.8,557.4 V558.6 M75.8,568.4 V569.6" stroke-width=".8" opacity=".7"/>
<path d="M77.9,557.4 V569.6" stroke-width=".9"/>
</g>
<circle cx="77.9" cy="561.4" r="1" fill="#ead9ef"/>
<!-- chrome -->
<g>
<circle cx="103.6" cy="563.5" r="6.2" fill="#e8453c"/>
<path d="M103.6,563.5 L98.3,560.3 A6.2,6.2 0 0 0 102.4,569.6 L105.6,564.6 Z" fill="#2fa24f"/>
<path d="M103.6,563.5 L109.8,563.2 A6.2,6.2 0 0 1 102.4,569.6 L105.2,564.8 Z" fill="#f8c62c"/>
<circle cx="103.6" cy="563.5" r="2.9" fill="#f2f2f2"/>
<circle cx="103.6" cy="563.5" r="2.2" fill="#4a8df0"/>
</g>
<!-- discord -->
<path d="M129,558.9 H138.9 V567 H137 L139,569 L135.8,567 H129 Z" fill="#7b9ad8"/>
<path d="M131,562 Q133.9,560.6 136.8,562 L137.2,565.4 Q133.9,566.6 130.6,565.4 Z" fill="#f4f6fc"/>
<circle cx="132.6" cy="564" r=".7" fill="#7f9edb"/><circle cx="135.2" cy="564" r=".7" fill="#7f9edb"/>
<!-- dark app -->
<rect x="158" y="557" width="13" height="13" fill="#070a12"/>
<path d="M161,566.5 L164,559.5 L168.5,562 L166,567.8 Z M162,563 L168.5,565.5" fill="none" stroke="#1a74b8" stroke-width="1.1"/>
<circle cx="164.4" cy="563.4" r="1.4" fill="#2388cc"/>
<!-- steam 1 -->
<g id="steam">
<circle cx="194.6" cy="563.7" r="6.1" fill="#14284a"/>
<path d="M188.6,564.6 A6.1,6.1 0 0 0 200.6,565 L196,569.8 H191 Z" fill="#1a66a0"/>
<path d="M188.6,563.6 L192.6,565.4 L196.4,562.6 L198.4,563.8 L193.4,567.4 L189,565.6 Z" fill="#f1f3f6"/>
<circle cx="197.2" cy="561.6" r="2" fill="none" stroke="#e9dfe9" stroke-width="1"/>
<circle cx="192.2" cy="566.2" r="1.3" fill="#f1f3f6"/>
</g>
<!-- minecraft -->
<g>
<path d="M219.2,560.6 L225.2,557.4 L231,560.6 L225.2,563.6 Z" fill="#6cb43a"/>
<path d="M219.2,560.6 L225.2,563.6 V570 L219.2,566.8 Z" fill="#8a5f3a"/>
<path d="M225.2,563.6 L231,560.6 V566.8 L225.2,570 Z" fill="#6e4a2b"/>
<path d="M219.2,560.6 L225.2,563.6 L231,560.6 V561.8 L225.2,564.8 L219.2,561.8 Z" fill="#58982e"/>
</g>
<!-- explorer -->
<g>
<path d="M249.2,559 H253 L254,560 H261.4 V568.8 H249.2 Z" fill="#f7d774"/>
<path d="M249.2,561 H261.4 V568.8 H249.2 Z" fill="#fbe69d"/>
<path d="M251.6,563.6 H259 V569 H257 V566 H253.6 V569 H251.6 Z" fill="#3d9fe8"/>
<rect x="250" y="559.6" width="2.2" height=".7" fill="#e0a030"/>
</g>
<!-- steam 2 -->
<g transform="translate(91.4,0)">
<circle cx="194.6" cy="563.7" r="6.1" fill="#14284a"/>
<path d="M188.6,564.6 A6.1,6.1 0 0 0 200.6,565 L196,569.8 H191 Z" fill="#1a66a0"/>
<path d="M188.6,563.6 L192.6,565.4 L196.4,562.6 L198.4,563.8 L193.4,567.4 L189,565.6 Z" fill="#f1f3f6"/>
<circle cx="197.2" cy="561.6" r="2" fill="none" stroke="#e9dfe9" stroke-width="1"/>
<circle cx="192.2" cy="566.2" r="1.3" fill="#f1f3f6"/>
</g>
<!-- tray: people -->
<g fill="none" stroke="#fff" stroke-width="1">
<circle cx="841" cy="559.6" r="1.9"/>
<path d="M837.6,565.4 Q837.8,562.2 841,562.2 Q844.2,562.2 844.4,565.4"/>
<circle cx="836.2" cy="563.4" r="1.9"/>
<path d="M832.8,569.4 Q833,566 836.2,566 Q839.4,566 839.6,569.4"/>
</g>
<!-- chevron -->
<path d="M857.4,566 L862,561.4 L866.6,566" fill="none" stroke="#fff" stroke-width="1"/>
<!-- cloud -->
<path d="M877,568 Q874.8,568 874.8,565.8 Q874.8,563.8 877,563.6 Q877.6,560.6 880.4,560.6 Q882.4,560.6 883.4,562.2 Q884.2,561.8 885,562 Q887,562.4 887,564.4 Q888.6,564.8 888.6,566.4 Q888.6,568 886.8,568 Z" fill="#fff"/>
<!-- monitor -->
<g fill="none" stroke="#fff" stroke-width=".9">
<path d="M896,559.2 H907.4 V566.6 H896 Z"/>
<path d="M899.4,568.8 H904.4 M901.9,566.6 V568.8"/>
<path d="M894.2,558.4 H897 V561.6 H894.2 Z" fill="#48104a"/>
</g>
<!-- speaker -->
<g fill="none" stroke="#fff" stroke-width=".9">
<path d="M914.4,562 H916.4 L919.2,559.2 V568.2 L916.4,565.4 H914.4 Z"/>
<path d="M921,561.6 Q922.4,563.7 921,565.8"/>
<path d="M922.8,560 Q925.2,563.7 922.8,567.4"/>
<path d="M924.6,558.6 Q927.8,563.7 924.6,568.8" opacity=".6"/>
</g>
<!-- notification -->
<path d="M991,557.2 H1003.6 V566.6 H999.4 L997.3,569.4 L995.2,566.6 H991 Z" fill="#fff"/>
<path d="M993.4,560 H1001.2 M993.4,562 H1001.2 M993.4,564 H998.4" stroke="#48104a" stroke-width=".8"/>
</svg>

<!-- text -->
<div class="t" style="top:4px;font-size:9.5px;line-height:9.5px;color:#ffffff;letter-spacing:-0.258px;left:77.80px;">Creatures</div>
<div class="t" style="top:23px;font-size:9.5px;line-height:9.5px;color:#ffffff;letter-spacing:-0.828px;left:17.00px;">File</div>
<div class="t" style="top:23px;font-size:9.5px;line-height:9.5px;color:#3b3b3b;letter-spacing:-0.786px;left:55.60px;">Home</div>
<div class="t" style="top:23px;font-size:9.5px;line-height:9.5px;color:#3b3b3b;letter-spacing:-0.832px;left:99.80px;">Share</div>
<div class="t" style="top:23px;font-size:9.5px;line-height:9.5px;color:#3b3b3b;letter-spacing:-0.555px;left:143.00px;">View</div>
<div class="t" style="top:72px;font-size:9px;line-height:9px;color:#3b3b3b;letter-spacing:-0.336px;left:6.50px;">Pin to Quick</div>
<div class="t" style="top:83px;font-size:9px;line-height:9px;color:#3b3b3b;letter-spacing:-0.836px;left:17.00px;">access</div>
<div class="t" style="top:72px;font-size:9px;line-height:9px;color:#3b3b3b;letter-spacing:-0.504px;left:60.00px;">Copy</div>
<div class="t" style="top:72px;font-size:9px;line-height:9px;color:#8f8f8f;letter-spacing:-0.803px;left:93.00px;">Paste</div>
<div class="t" style="top:45px;font-size:9px;line-height:9px;color:#3b3b3b;letter-spacing:-0.472px;left:136.60px;">Cut</div>
<div class="t" style="top:62px;font-size:9px;line-height:9px;color:#3b3b3b;letter-spacing:-0.415px;left:136.60px;">Copy path</div>
<div class="t" style="top:79px;font-size:9px;line-height:9px;color:#8f8f8f;letter-spacing:-0.438px;left:136.60px;">Paste shortcut</div>
<div class="t" style="top:72px;font-size:9px;line-height:9px;color:#3b3b3b;letter-spacing:-0.504px;left:205.00px;">Move</div>
<div class="t" style="top:83px;font-size:9px;line-height:9px;color:#3b3b3b;letter-spacing:-0.308px;left:208.90px;">to</div>
<div class="t" style="top:72px;font-size:9px;line-height:9px;color:#3b3b3b;letter-spacing:-0.604px;left:238.60px;">Copy</div>
<div class="t" style="top:83px;font-size:9px;line-height:9px;color:#3b3b3b;letter-spacing:-0.358px;left:241.80px;">to</div>
<div class="t" style="top:72px;font-size:9px;line-height:9px;color:#3b3b3b;letter-spacing:-0.553px;left:275.80px;">Delete</div>
<div class="t" style="top:72px;font-size:9px;line-height:9px;color:#3b3b3b;letter-spacing:-0.672px;left:306.00px;">Rename</div>
<div class="t" style="top:72px;font-size:9px;line-height:9px;color:#3b3b3b;letter-spacing:-0.505px;left:353.90px;">New</div>
<div class="t" style="top:83px;font-size:9px;line-height:9px;color:#3b3b3b;letter-spacing:-0.203px;left:351.60px;">folder</div>
<div class="t" style="top:45px;font-size:9px;line-height:9px;color:#3b3b3b;letter-spacing:-0.264px;left:396.50px;">New item</div>
<div class="t" style="top:62px;font-size:9px;line-height:9px;color:#3b3b3b;letter-spacing:-0.821px;left:396.50px;">Easy access</div>
<div class="t" style="top:72px;font-size:9px;line-height:9px;color:#3b3b3b;letter-spacing:-0.353px;left:457.40px;">Properties</div>
<div class="t" style="top:45px;font-size:9px;line-height:9px;color:#3b3b3b;letter-spacing:-0.508px;left:514.30px;">Open</div>
<div class="t" style="top:63px;font-size:9px;line-height:9px;color:#8f8f8f;letter-spacing:-0.554px;left:514.50px;">Edit</div>
<div class="t" style="top:80px;font-size:9px;line-height:9px;color:#3b3b3b;letter-spacing:-0.245px;left:514.50px;">History</div>
<div class="t" style="top:45px;font-size:9px;line-height:9px;color:#3b3b3b;letter-spacing:-0.413px;left:569.60px;">Select all</div>
<div class="t" style="top:62px;font-size:9px;line-height:9px;color:#3b3b3b;letter-spacing:-0.468px;left:569.60px;">Select none</div>
<div class="t" style="top:79px;font-size:9px;line-height:9px;color:#3b3b3b;letter-spacing:-0.308px;left:569.60px;">Invert selection</div>
<div class="t" style="top:99px;font-size:9px;line-height:9px;color:#6a6a6a;letter-spacing:-0.392px;left:80.00px;">Clipboard</div>
<div class="t" style="top:99px;font-size:9px;line-height:9px;color:#6a6a6a;letter-spacing:-0.441px;left:252.00px;">Organize</div>
<div class="t" style="top:99px;font-size:9px;line-height:9px;color:#6a6a6a;letter-spacing:-0.505px;left:388.50px;">New</div>
<div class="t" style="top:99px;font-size:9px;line-height:9px;color:#6a6a6a;letter-spacing:-0.508px;left:489.90px;">Open</div>
<div class="t" style="top:99px;font-size:9px;line-height:9px;color:#6a6a6a;letter-spacing:-0.569px;left:579.60px;">Select</div>
<div class="t" style="top:118px;font-size:9.7px;line-height:9.7px;color:#2b2b2b;letter-spacing:-0.679px;left:115.30px;">This PC</div>
<div class="t" style="top:118px;font-size:9.7px;line-height:9.7px;color:#2b2b2b;letter-spacing:-0.200px;left:163.00px;">Data (D:)</div>
<div class="t" style="top:118px;font-size:9.7px;line-height:9.7px;color:#2b2b2b;letter-spacing:-0.340px;left:217.50px;">Steam</div>
<div class="t" style="top:118px;font-size:9.7px;line-height:9.7px;color:#2b2b2b;letter-spacing:-0.099px;left:261.00px;">steamapps</div>
<div class="t" style="top:118px;font-size:9.7px;line-height:9.7px;color:#2b2b2b;letter-spacing:0.057px;left:325.50px;">common</div>
<div class="t" style="top:118px;font-size:9.7px;line-height:9.7px;color:#2b2b2b;letter-spacing:-0.495px;left:381.00px;">Species ALRE</div>
<div class="t" style="top:118px;font-size:9.7px;line-height:9.7px;color:#2b2b2b;letter-spacing:-0.339px;left:454.50px;">Creatures</div>
<div class="t" style="top:119px;font-size:9.7px;line-height:9.7px;color:#6d6d6d;letter-spacing:-0.426px;left:861.70px;">Search Creatures</div>
<div class="t" style="top:149px;font-size:9.5px;line-height:9.5px;color:#1a1a1a;letter-spacing:-0.542px;left:34.80px;">This PC</div>
<div class="t" style="top:168px;font-size:9.5px;line-height:9.5px;color:#1a1a1a;left:41.20px;">3D Objects</div>
<div class="t" style="top:187px;font-size:9.5px;line-height:9.5px;color:#1a1a1a;left:41.20px;">Desktop</div>
<div class="t" style="top:207px;font-size:9.5px;line-height:9.5px;color:#1a1a1a;left:41.20px;">Documents</div>
<div class="t" style="top:226px;font-size:9.5px;line-height:9.5px;color:#1a1a1a;left:41.20px;">Downloads</div>
<div class="t" style="top:245px;font-size:9.5px;line-height:9.5px;color:#1a1a1a;left:41.20px;">Music</div>
<div class="t" style="top:264px;font-size:9.5px;line-height:9.5px;color:#1a1a1a;letter-spacing:-0.329px;left:41.20px;">Pictures</div>
<div class="t" style="top:283px;font-size:9.5px;line-height:9.5px;color:#1a1a1a;left:41.20px;">Videos</div>
<div class="t" style="top:303px;font-size:9.5px;line-height:9.5px;color:#1a1a1a;letter-spacing:-0.135px;left:41.20px;">Windows (C:)</div>
<div class="t" style="top:322px;font-size:9.5px;line-height:9.5px;color:#1a1a1a;letter-spacing:-0.150px;left:41.20px;">Data (D:)</div>
<div class="t" style="top:341px;font-size:9.5px;line-height:9.5px;color:#1a1a1a;left:47.30px;">DiscordBot</div>
<div class="t" style="top:360px;font-size:9.5px;line-height:9.5px;color:#1a1a1a;letter-spacing:-0.369px;left:47.30px;">FileZilla FTP Client</div>
<div class="t" style="top:379px;font-size:9.5px;line-height:9.5px;color:#1a1a1a;left:47.30px;">Git</div>
<div class="t" style="top:399px;font-size:9.5px;line-height:9.5px;color:#1a1a1a;letter-spacing:-0.078px;left:47.30px;">Overwatch</div>
<div class="t" style="top:418px;font-size:9.5px;line-height:9.5px;color:#1a1a1a;letter-spacing:-0.121px;left:47.30px;">Overwatch Test</div>
<div class="t" style="top:437px;font-size:9.5px;line-height:9.5px;color:#1a1a1a;letter-spacing:-0.347px;left:47.30px;">Server</div>
<div class="t" style="top:456px;font-size:9.5px;line-height:9.5px;color:#1a1a1a;letter-spacing:-0.170px;left:47.30px;">StarCraft II</div>
<div class="t" style="top:475px;font-size:9.5px;line-height:9.5px;color:#1a1a1a;letter-spacing:-0.314px;left:47.30px;">Steam</div>
<div class="t" style="top:495px;font-size:9.5px;line-height:9.5px;color:#1a1a1a;letter-spacing:-0.552px;left:47.30px;">VR</div>
<div class="t" style="top:520px;font-size:9.5px;line-height:9.5px;color:#1a1a1a;left:35.20px;">Network</div>
<div class="t" style="top:538px;font-size:9.5px;line-height:9.5px;color:#2b4574;left:11.70px;">43 items</div>
<div class="t" style="top:538px;font-size:9.5px;line-height:9.5px;color:#2b4574;letter-spacing:-0.114px;left:67.20px;">1 item selected</div>
<div class="t" style="top:559px;font-size:9.5px;line-height:9.5px;color:#ffffff;letter-spacing:-0.127px;left:937.90px;">6:04 PM</div>
<div class="t" style="top:255px;font-size:9.5px;line-height:9.5px;color:#111111;left:98.00px;width:200px;text-align:center;">Aquatic</div>
<div class="t" style="top:255px;font-size:9.5px;line-height:9.5px;color:#111111;left:222.20px;width:200px;text-align:center;">Dinosaurs</div>
<div class="t" style="top:255px;font-size:9.5px;line-height:9.5px;color:#111111;left:346.40px;width:200px;text-align:center;">Predator and Prey</div>
<div class="t" style="top:255px;font-size:9.5px;line-height:9.5px;color:#111111;left:470.60px;width:200px;text-align:center;">Amyaurus</div>
<div class="t" style="top:268px;font-size:9.5px;line-height:9.5px;color:#111111;left:470.60px;width:200px;text-align:center;">haemimanii.txt</div>
<div class="t" style="top:255px;font-size:9.5px;line-height:9.5px;color:#111111;left:594.80px;width:200px;text-align:center;">Amyaurus</div>
<div class="t" style="top:268px;font-size:9.5px;line-height:9.5px;color:#111111;left:594.80px;width:200px;text-align:center;">haemimanii_Thumb.png</div>
<div class="t" style="top:255px;font-size:9.5px;line-height:9.5px;color:#111111;left:719.00px;width:200px;text-align:center;">Blumalis imortality.txt</div>
<div class="t" style="top:255px;font-size:9.5px;line-height:9.5px;color:#111111;left:843.20px;width:200px;text-align:center;">Blumalis</div>
<div class="t" style="top:268px;font-size:9.5px;line-height:9.5px;color:#111111;left:843.20px;width:200px;text-align:center;">imortality_Thumb.png</div>
<div class="t" style="top:395px;font-size:9.5px;line-height:9.5px;color:#111111;left:98.00px;width:200px;text-align:center;">Clambeta frogguq.txt</div>
<div class="t" style="top:395px;font-size:9.5px;line-height:9.5px;color:#111111;left:222.20px;width:200px;text-align:center;">Clambeta</div>
<div class="t" style="top:408px;font-size:9.5px;line-height:9.5px;color:#111111;left:222.20px;width:200px;text-align:center;">frogguq_Thumb.png</div>
<div class="t" style="top:395px;font-size:9.5px;line-height:9.5px;color:#111111;left:346.40px;width:200px;text-align:center;">Craby.txt</div>
<div class="t" style="top:395px;font-size:9.5px;line-height:9.5px;color:#111111;left:470.60px;width:200px;text-align:center;">Craby_Thumb.png</div>
<div class="t" style="top:395px;font-size:9.5px;line-height:9.5px;color:#111111;left:594.80px;width:200px;text-align:center;">DinoDog.txt</div>
<div class="t" style="top:395px;font-size:9.5px;line-height:9.5px;color:#111111;left:719.00px;width:200px;text-align:center;">DinoDog_Thumb.png</div>
<div class="t" style="top:395px;font-size:9.5px;line-height:9.5px;color:#111111;left:843.20px;width:200px;text-align:center;">Haemia</div>
<div class="t" style="top:408px;font-size:9.5px;line-height:9.5px;color:#111111;left:843.20px;width:200px;text-align:center;">armenitasmaniae.txt</div>
<!-- status bar separators -->
<div class="a" style="left:57px;top:537px;width:1px;height:12px;background:#ececec;"></div>
<div class="a" style="left:138px;top:537px;width:1px;height:12px;background:#ececec;"></div>
<!-- scrollbars drawn above text -->
<div class="a" style="left:111.3px;top:138px;width:13.3px;height:394.8px;background:#f0f0f0;"></div>
<div class="a" style="left:111.3px;top:284.4px;width:13.3px;height:226.8px;background:#cdcdcd;"></div>
<div class="a" style="left:124.6px;top:138px;width:12px;height:395px;background:#fff;"></div>
<svg width="1024" height="576" viewBox="0 0 1024 576" style="left:0;top:0;">
<g fill="none" stroke="#505050" stroke-width="1.2">
<path d="M114.8,145.6 L118,142.4 L121.2,145.6"/>
<path d="M114.8,523.8 L118,527 L121.2,523.8"/>
<path d="M1014.2,145.6 L1017.4,142.4 L1020.6,145.6"/>
<path d="M1014.2,523.8 L1017.4,527 L1020.6,523.8"/>
</g>
<!-- view mode icons -->
<g>
<rect x="988.3" y="535.4" width="3.3" height="11.2" fill="#f4f6f8" stroke="#c4c4c4" stroke-width=".5"/>
<rect x="989" y="535.9" width="2" height="1.8" fill="#cfe3f5"/><rect x="989" y="538.8" width="2" height="1.8" fill="#f3d9b0"/>
<rect x="989" y="541.6" width="2" height="1.8" fill="#e0913a"/><rect x="989" y="544.3" width="2" height="1.8" fill="#d9e6f2"/>
<path d="M992.2,536.5 H995 M996.2,536.5 H999.6 M992.2,539.4 H995 M996.2,539.4 H999.6 M992.2,542.3 H995 M996.2,542.3 H999.6 M992.2,544.7 H995 M996.2,544.7 H999.6" stroke="#8e8e8e" stroke-width=".9"/>
<rect x="1005.3" y="537.2" width="11.4" height="8.6" fill="#dfe9f4" stroke="#b2aca8" stroke-width=".7"/>
<rect x="1006.2" y="538" width="9.6" height="3.2" fill="#6fb0ec"/>
<path d="M1006.2,541.8 L1007.4,540.2 L1010,541 L1013,542.2 L1015.8,542.6 V543.4 H1006.2 Z" fill="#3a4a5a"/>
<path d="M1007,541 l1,-1 l1,1 z" fill="#4a9a3a"/>
<rect x="1006.2" y="543.2" width="9.6" height="1.9" fill="#a9cbea"/>
<path d="M1008.4,539.4 h3.4" stroke="#dbeaf8" stroke-width=".8"/>
</g>
</svg>

</div>
</body>
</html>
